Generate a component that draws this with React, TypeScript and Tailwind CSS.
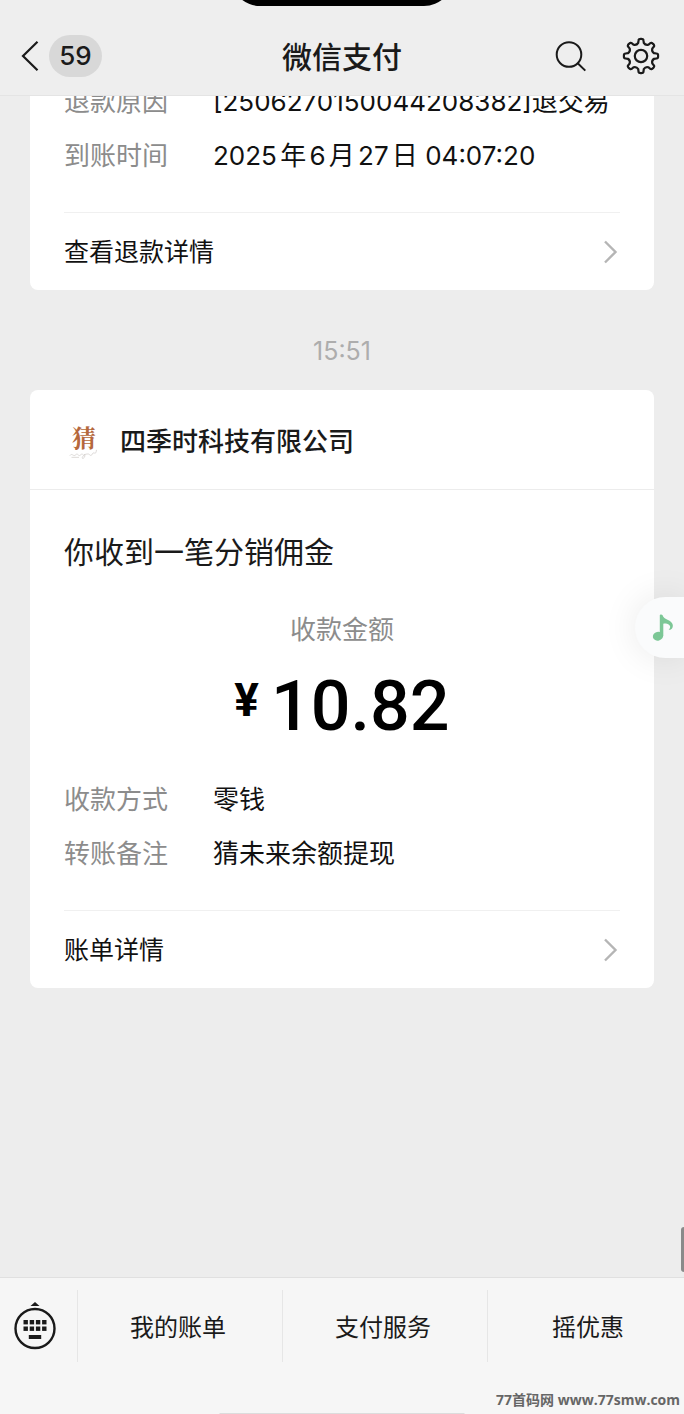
type DetailRow = { label: string; value: string };

const refundRows: DetailRow[] = [
  { label: "退款原因", value: "[2506270150044208382]退交易" },
  { label: "到账时间", value: "2025年6月27日 04:07:20" },
];

const paymentRows: DetailRow[] = [
  { label: "收款方式", value: "零钱" },
  { label: "转账备注", value: "猜未来余额提现" },
];

const menus = ["我的账单", "支付服务", "摇优惠"];

// Outline of an eight-toothed gear centred on 0,0
function gearPath() {
  const polar = (r: number, deg: number) => {
    const a = (deg * Math.PI) / 180;
    return `${(r * Math.cos(a)).toFixed(2)} ${(r * Math.sin(a)).toFixed(2)}`;
  };
  let d = "";
  for (let i = 0; i < 8; i++) {
    const c = i * 45;
    d += `${i === 0 ? "M" : "L"}${polar(13.4, c - 12)}L${polar(15.8, c - 9)}Q${polar(17.4, c - 8)} ${polar(17.1, c)}`;
    d += `Q${polar(17.4, c + 8)} ${polar(15.8, c + 9)}L${polar(13.4, c + 12)}Q${polar(11.4, c + 22.5)} ${polar(13.4, c + 33)}`;
  }
  return d + "Z";
}

function Chevron() {
  return (
    <svg className="w-4 h-6" viewBox="0 0 16 24" fill="none" stroke="#b5b5b5" strokeWidth="2.4">
      <path d="M3 1.5 13.5 12 3 22.5" />
    </svg>
  );
}

function Details({ rows }: { rows: DetailRow[] }) {
  return (
    <dl className="flex flex-col gap-[14px] text-[26px] leading-10">
      {rows.map((row) => (
        <div key={row.label} className="flex">
          <dt className="w-[149px] shrink-0 text-[#8c8c8c]">{row.label}</dt>
          <dd className="whitespace-nowrap text-[#111] [text-autospace:normal]">{row.value}</dd>
        </div>
      ))}
    </dl>
  );
}

function CardLink({ label }: { label: string }) {
  return (
    <a href="#" className="flex h-[78px] items-center justify-between border-t border-[#f0f0f0] text-[25px] text-[#111]">
      <span className="pt-0.5">{label}</span>
      <span className="pr-0.5">
        <Chevron />
      </span>
    </a>
  );
}

export default function App() {
  return (
    <div className="relative flex min-h-screen flex-col overflow-hidden bg-[#ededed] font-['Inter','Noto_Sans_CJK_SC',sans-serif] text-[#1a1a1a]">
      {/* Header */}
      <header className="relative grid h-24 grid-cols-[1fr_auto_1fr] items-center border-b border-[#e4e4e4] bg-[#eeeeee] px-5 pt-4">
        <div className="absolute -top-[52px] left-1/2 h-[58px] w-[222px] -translate-x-1/2 rounded-full bg-black" />
        <button type="button" aria-label="返回" className="flex items-center gap-[9px] justify-self-start">
          <svg className="w-5 h-8" viewBox="0 0 20 32" fill="none" stroke="#1a1a1a" strokeWidth="2.2">
            <path d="M17.5 1.8 3 16 17.5 30.2" />
          </svg>
          <span className="flex h-[42px] w-[53px] items-center justify-center rounded-full bg-[#d8d8d8] text-[26px] font-medium">59</span>
        </button>
        <h1 className="pt-0.5 text-[30px] font-medium leading-10">微信支付</h1>
        <div className="flex items-center gap-[34px] justify-self-end pr-1">
          <button type="button" aria-label="搜索">
            <svg className="size-9" viewBox="0 0 36 36" fill="none" stroke="#1a1a1a" strokeWidth="2">
              <circle cx="17" cy="16.5" r="12.3" />
              <path d="m25.7 25.2 7.6 7.4" />
            </svg>
          </button>
          <button type="button" aria-label="设置">
            <svg className="size-[38px]" viewBox="-19 -19 38 38" fill="none" stroke="#1a1a1a" strokeWidth="2.2" strokeLinejoin="round">
              <path d={gearPath()} />
              <circle r="6.2" />
            </svg>
          </button>
        </div>
      </header>

      {/* Messages */}
      <main className="flex-1 overflow-hidden px-[30px]">
        <section className="-mt-6 rounded-lg bg-white px-[34px] pt-[10px]">
          <Details rows={refundRows} />
          <div className="pt-9">
            <CardLink label="查看退款详情" />
          </div>
        </section>

        <time className="block pt-[52px] pb-[30px] text-center text-[25px] leading-[18px] text-[#adadad]">15:51</time>

        <section className="rounded-lg bg-white">
          <div className="flex h-[100px] items-center gap-4 border-b border-[#ececec] px-[34px] pt-1">
            <div className="flex w-10 flex-col items-center">
              <span className="font-['Noto_Serif_CJK_SC','Noto_Sans_CJK_SC',serif] text-2xl font-bold leading-6 text-[#b5683c]">猜</span>
              <svg className="h-2.5 w-9" viewBox="0 0 36 12" fill="none" stroke="#d6d3d0" strokeWidth="1">
                <path d="M1 8c3-4 4 2 7-1s3 3 6 0 3 3 5-1c1 5-4 7-3 4 2-4 5-4 7-4s3 4 5 0 4 3 5-5M3 10h9" />
              </svg>
            </div>
            <h2 className="text-[26px] font-medium">四季时科技有限公司</h2>
          </div>
          <div className="px-[34px] pt-10">
            <h3 className="text-[30px] leading-[44px]">你收到一笔分销佣金</h3>
            <p className="pt-9 text-center text-[26px] leading-10 text-[#8c8c8c]">收款金额</p>
            <p className="flex items-start justify-center gap-3 pt-5 pb-[38px] font-['Roboto',sans-serif] text-black">
              <span className="text-[46px] font-bold leading-[60px]">¥</span>
              <span className="text-[70px] font-medium leading-[72px]">10.82</span>
            </p>
            <Details rows={paymentRows} />
            <div className="pt-9">
              <CardLink label="账单详情" />
            </div>
          </div>
        </section>
      </main>

      {/* Floating music player */}
      <button
        type="button"
        aria-label="音乐"
        className="absolute right-0 top-[597px] flex h-[61px] w-[49px] items-center justify-center rounded-l-full bg-[#fafbfc] pl-1.5 shadow-[0_0_36px_rgba(0,0,0,0.09)]"
      >
        <svg className="h-7 w-6" viewBox="0 0 24 28" fill="#7cc796">
          <ellipse cx="7" cy="22.2" rx="5.2" ry="4.4" transform="rotate(-14 7 22.2)" />
          <path d="M8.8 22V1.2c0-.9 2.4-.9 2.800 0 .6 2.400 2.500 3.400 5.400 4.700 4.500 2 5.800 5.100 4.300 8-.7 1.500-2.300 2.200-3.800 1.700 2.600-1.600 2.300-4.800-1.500-5.900-1.500-.4-2.800-.3-3.700 0V22Z" />
        </svg>
      </button>
      <div className="absolute right-0 top-[1227px] h-[45px] w-[3px] rounded-l bg-[#8a8a8a]" />

      {/* Bottom menu */}
      <footer className="relative h-[137px] overflow-hidden border-t border-[#e0e0e0] bg-[#f6f6f6] pt-3">
        <nav className="-mr-2 flex h-[72px]">
          <button type="button" aria-label="键盘" className="flex w-[77px] shrink-0 items-center pl-3">
            <svg className="h-12 w-[46px]" viewBox="0 0 46 48" fill="#1a1a1a">
              <path d="m23 0 4.500 4h-9Z" />
              <circle cx="23" cy="26.500" r="19.500" fill="none" stroke="#1a1a1a" strokeWidth="2.400" />
              {[11.5, 17.7, 23.9, 30.1].map((x) => (
                <g key={x}>
                  <rect x={x} y="18" width="4.400" height="4.400" />
                  <rect x={x} y="24.500" width="4.400" height="4.400" />
                </g>
              ))}
              <rect x="16.800" y="33" width="12.400" height="4" />
            </svg>
          </button>
          {menus.map((menu) => (
            <button key={menu} type="button" className="flex-1 border-l border-[#e6e6e6] pt-1 pr-1 text-2xl">
              {menu}
            </button>
          ))}
        </nav>
        <p className="absolute bottom-1 right-1 font-['Open_Sans','Noto_Sans_CJK_SC',sans-serif] text-sm font-bold leading-5 text-[#666]">
          77首码网 <a href="#">www.77smw.com</a>
        </p>
        <div className="absolute bottom-0 left-1/2 h-px w-[245px] -translate-x-1/2 bg-[#dcdcdc]" />
      </footer>
    </div>
  );
}
